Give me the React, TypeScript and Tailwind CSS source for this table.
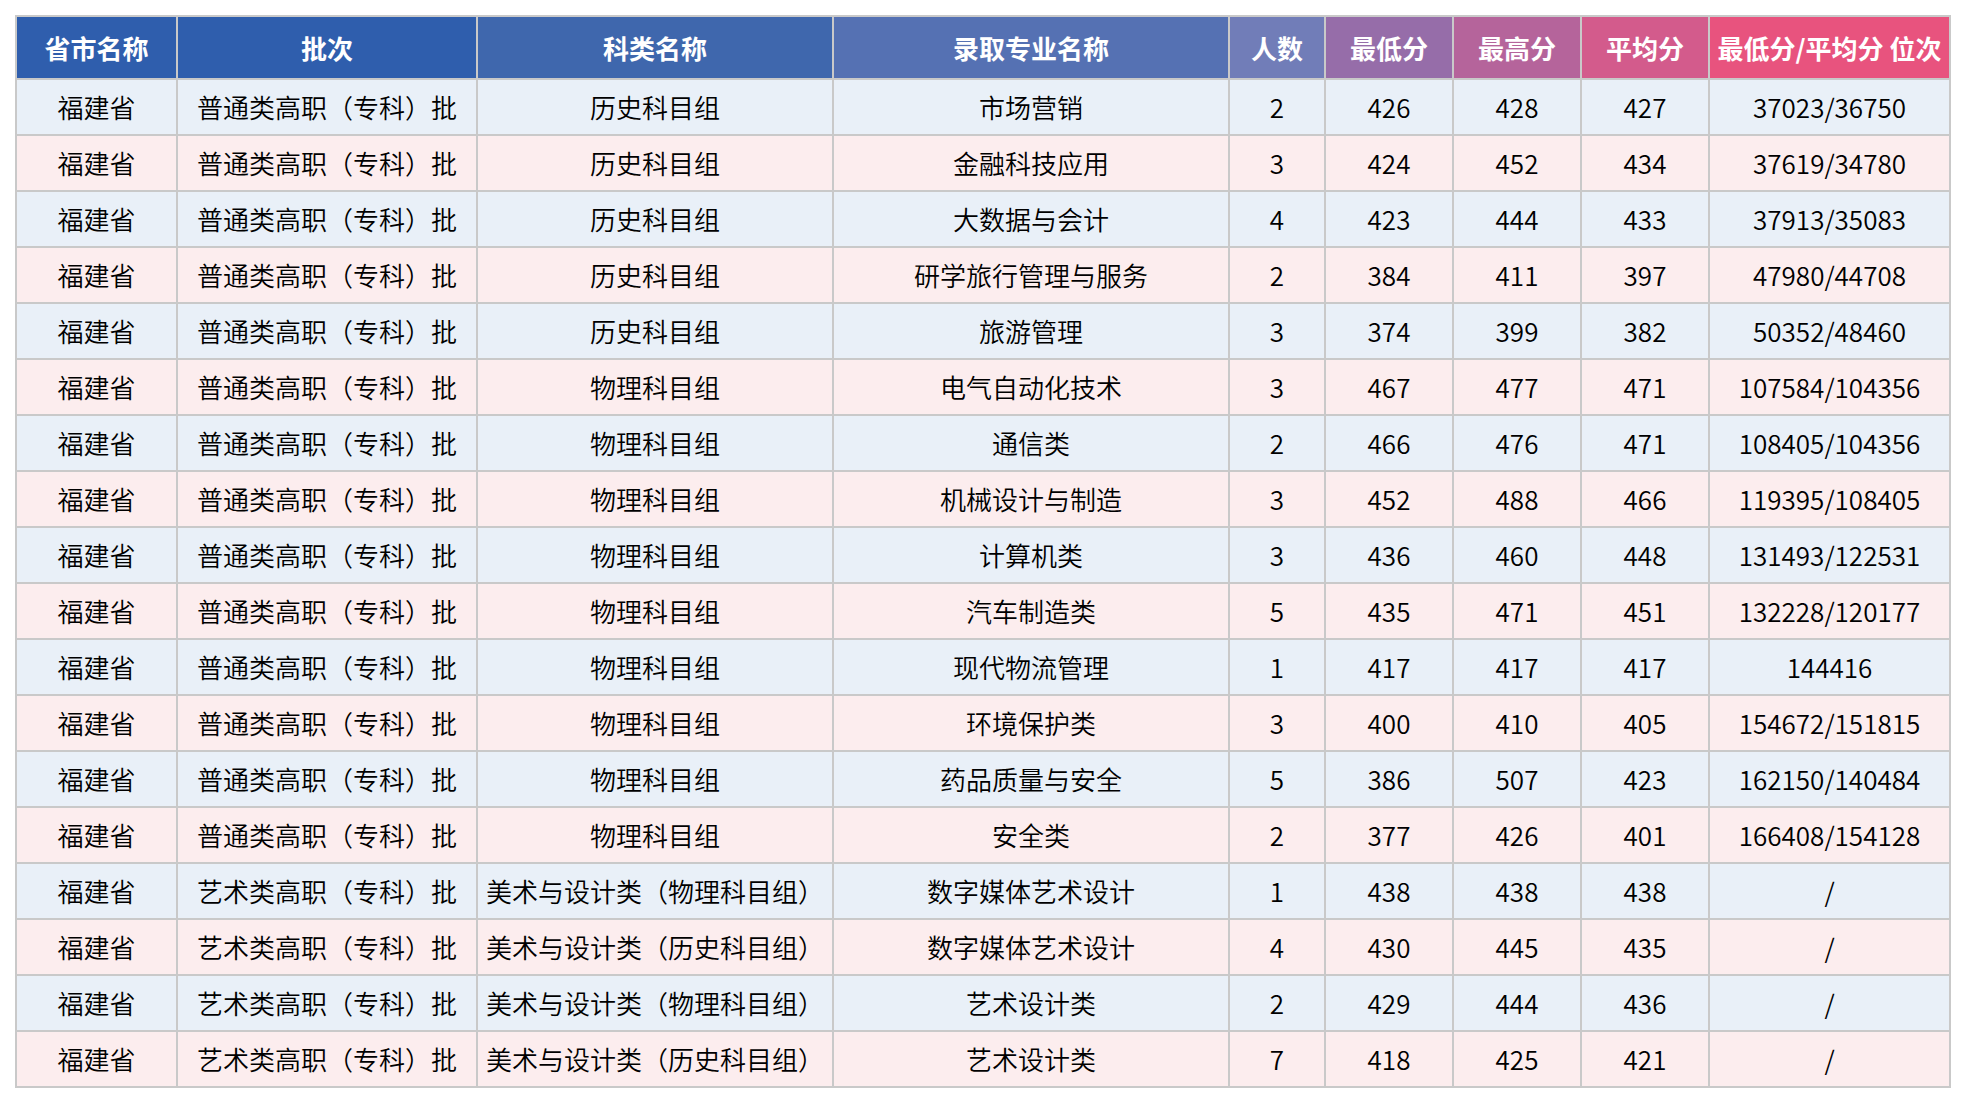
const headers = [
  { label: "省市名称", bg: "bg-[#2f5ead]" },
  { label: "批次", bg: "bg-[#2f5ead]" },
  { label: "科类名称", bg: "bg-[#3f67ad]" },
  { label: "录取专业名称", bg: "bg-[#5571b3]" },
  { label: "人数", bg: "bg-[#717db8]" },
  { label: "最低分", bg: "bg-[#966da9]" },
  { label: "最高分", bg: "bg-[#b5649b]" },
  { label: "平均分", bg: "bg-[#d35b8c]" },
  { label: "最低分/平均分 位次", bg: "bg-[#e8537e]" },
];

const colWidths = ["w-[161px]", "w-[300px]", "w-[356px]", "w-[396px]", "w-[96px]", "w-[128px]", "w-[128px]", "w-[128px]", "w-[241px]"];

const PT = "普通类高职（专科）批";
const YS = "艺术类高职（专科）批";

const rows: string[][] = [
  ["福建省", PT, "历史科目组", "市场营销", "2", "426", "428", "427", "37023/36750"],
  ["福建省", PT, "历史科目组", "金融科技应用", "3", "424", "452", "434", "37619/34780"],
  ["福建省", PT, "历史科目组", "大数据与会计", "4", "423", "444", "433", "37913/35083"],
  ["福建省", PT, "历史科目组", "研学旅行管理与服务", "2", "384", "411", "397", "47980/44708"],
  ["福建省", PT, "历史科目组", "旅游管理", "3", "374", "399", "382", "50352/48460"],
  ["福建省", PT, "物理科目组", "电气自动化技术", "3", "467", "477", "471", "107584/104356"],
  ["福建省", PT, "物理科目组", "通信类", "2", "466", "476", "471", "108405/104356"],
  ["福建省", PT, "物理科目组", "机械设计与制造", "3", "452", "488", "466", "119395/108405"],
  ["福建省", PT, "物理科目组", "计算机类", "3", "436", "460", "448", "131493/122531"],
  ["福建省", PT, "物理科目组", "汽车制造类", "5", "435", "471", "451", "132228/120177"],
  ["福建省", PT, "物理科目组", "现代物流管理", "1", "417", "417", "417", "144416"],
  ["福建省", PT, "物理科目组", "环境保护类", "3", "400", "410", "405", "154672/151815"],
  ["福建省", PT, "物理科目组", "药品质量与安全", "5", "386", "507", "423", "162150/140484"],
  ["福建省", PT, "物理科目组", "安全类", "2", "377", "426", "401", "166408/154128"],
  ["福建省", YS, "美术与设计类（物理科目组）", "数字媒体艺术设计", "1", "438", "438", "438", "/"],
  ["福建省", YS, "美术与设计类（历史科目组）", "数字媒体艺术设计", "4", "430", "445", "435", "/"],
  ["福建省", YS, "美术与设计类（物理科目组）", "艺术设计类", "2", "429", "444", "436", "/"],
  ["福建省", YS, "美术与设计类（历史科目组）", "艺术设计类", "7", "418", "425", "421", "/"],
];

export default function App() {
  return (
    <div className="bg-white w-[1964px] h-[1104px] p-[15px] font-['Noto_Sans_CJK_SC',sans-serif] text-black">
      <table className="table-fixed w-[1934px] border-collapse border-2 border-[#c9c9c9]">
        <colgroup>
          {colWidths.map((w, i) => (
            <col key={i} className={w} />
          ))}
        </colgroup>
        <thead>
          <tr className="h-[63px]">
            {headers.map((h) => (
              <th
                key={h.label}
                className={`${h.bg} border-2 border-[#c9c9c9] text-white text-[26px] font-bold whitespace-nowrap p-0`}
              >
                {h.label}
              </th>
            ))}
          </tr>
        </thead>
        <tbody>
          {rows.map((r, ri) => (
            <tr key={ri} className={`h-[56px] ${ri % 2 === 0 ? "bg-[#e9f0f8]" : "bg-[#fcedee]"}`}>
              {r.map((c, ci) => (
                <td
                  key={ci}
                  className="border-2 border-[#c9c9c9] text-center text-[26px] font-[350] leading-none whitespace-nowrap p-0"
                >
                  {c}
                </td>
              ))}
            </tr>
          ))}
        </tbody>
      </table>
    </div>
  );
}
